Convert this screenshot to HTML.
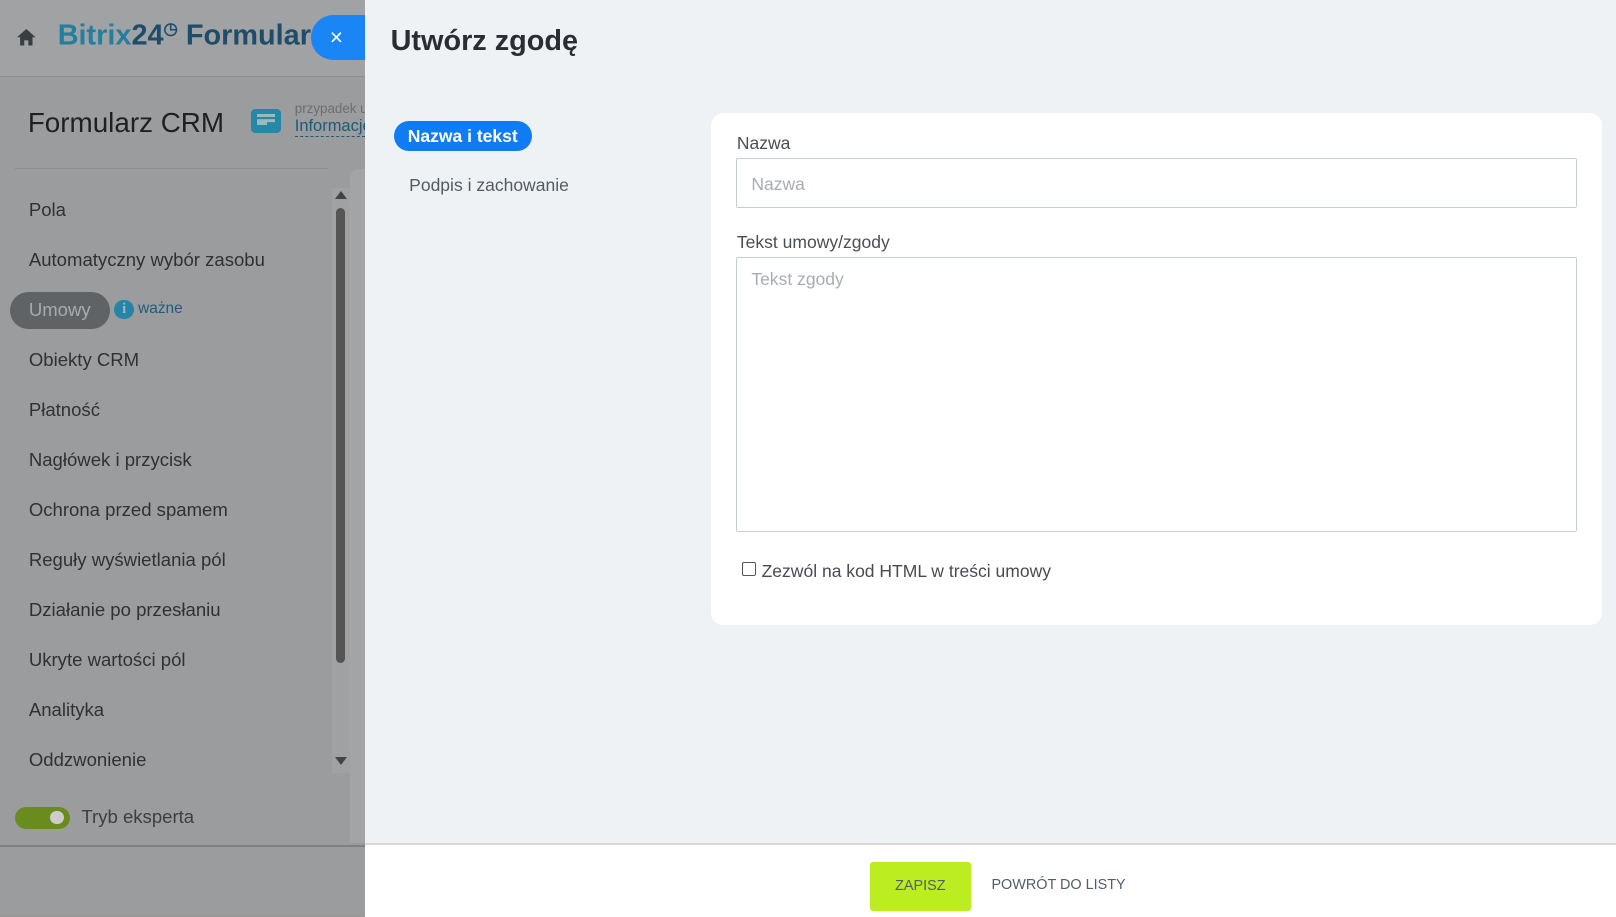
<!DOCTYPE html>
<html><head><meta charset="utf-8"><style>
html,body{margin:0;padding:0;}
body{width:1568px;height:888px;overflow:hidden;zoom:1.03061;font-family:"Liberation Sans",sans-serif;position:relative;background:#999;}
.abs{position:absolute;}
.left{left:0;top:0;width:354px;height:888px;background:#9b9c9d;}
.top{left:0;top:0;width:354px;height:74px;background:#a1a2a3;border-bottom:1px solid #8e8f90;}
.nav{left:28px;font-size:18px;color:#2f3235;}
.panel{left:354px;top:0;width:1214px;height:818px;background:#eef2f4;}
.foot{left:354px;top:818px;width:1214px;height:70px;background:#fff;border-top:2px solid #d5d7d9;}
.card{left:690px;top:110px;width:864px;height:496px;background:#fff;border-radius:12px;}
.lbl{font-size:17px;color:#4a4f55;}
.inp{border:1px solid #c6cdd3;border-radius:2px;background:#fff;box-sizing:border-box;}
.ph{color:#a8adb4;font-size:17px;}
</style></head><body>
<div class="abs left"></div>
<div class="abs top"></div>
<svg class="abs" style="left:16px;top:27px" width="20" height="18" viewBox="0 0 20 18"><path d="M10 1L1 9h3v8h4v-5h4v5h4V9h3z" fill="#3a3d40"/></svg>
<div class="abs" style="left:56px;top:18px;font-size:28px;font-weight:bold;white-space:nowrap"><span style="color:#237fa0">Bitrix</span><span style="color:#1d4d6a">24</span><span style="color:#1d4d6a;font-size:16px;vertical-align:super">&#9719;</span><span style="color:#1d4d6a"> Formularz</span></div>
<div class="abs" style="left:302px;top:15px;width:60px;height:43px;background:#1a86f5;border-radius:22px 0 0 22px;color:#fff;font-size:22px;line-height:43px;padding-left:18px;box-sizing:border-box">×</div>
<div class="abs" style="left:27px;top:104px;font-size:27px;color:#1e2124">Formularz CRM</div>
<div class="abs" style="left:244px;top:106px;width:29px;height:23px;background:#2688a8;border-radius:4px"><div style="margin:5px 0 0 5px;width:18px;height:3px;background:#9bb;box-shadow:0 5px 0 #9bb"></div><div style="margin:4px 0 0 5px;width:10px;height:3px;background:#9bb"></div></div>
<div class="abs" style="left:286px;top:98px;font-size:13px;color:#6b6e72">przypadek u</div>
<div class="abs" style="left:286px;top:114px;font-size:16px;color:#1c5a7a;border-bottom:1px dashed #1c5a7a;width:68px;overflow:hidden;white-space:nowrap">Informacje</div>
<div class="abs" style="left:15px;top:163px;width:303px;height:1px;background:#8c8d8e"></div>
<div class="abs" style="left:340px;top:164px;width:14px;height:654px;background:#a3a4a5;border-radius:8px 0 0 0"></div>
<div class="abs" style="left:322px;top:182px;width:18px;height:568px;background:#a0a1a2"></div>
<div class="abs" style="left:325px;top:185px;width:0;height:0;border-left:6px solid transparent;border-right:6px solid transparent;border-bottom:8px solid #444"></div>
<div class="abs" style="left:326px;top:202px;width:9px;height:441px;background:#555;border-radius:5px"></div>
<div class="abs" style="left:325px;top:735px;width:0;height:0;border-left:6px solid transparent;border-right:6px solid transparent;border-top:8px solid #444"></div>
<div class="abs nav" style="top:193px">Pola</div>
<div class="abs nav" style="top:242px">Automatyczny wybór zasobu</div>
<div class="abs" style="left:10px;top:283px;width:97px;height:36px;background:#5f6366;border-radius:18px"></div>
<div class="abs nav" style="top:290px;color:#a8abae">Umowy</div>
<div class="abs" style="left:111px;top:291px;width:19px;height:19px;border-radius:50%;background:#2584a8;color:#9bc;font-size:14px;font-weight:bold;text-align:center;line-height:19px;font-family:'Liberation Serif',serif">i</div>
<div class="abs" style="left:134px;top:291px;font-size:15px;color:#1d5d7e">ważne</div>
<div class="abs nav" style="top:339px">Obiekty CRM</div>
<div class="abs nav" style="top:387px">Płatność</div>
<div class="abs nav" style="top:436px">Nagłówek i przycisk</div>
<div class="abs nav" style="top:484px">Ochrona przed spamem</div>
<div class="abs nav" style="top:533px">Reguły wyświetlania pól</div>
<div class="abs nav" style="top:581px">Działanie po przesłaniu</div>
<div class="abs nav" style="top:630px">Ukryte wartości pól</div>
<div class="abs nav" style="top:678px">Analityka</div>
<div class="abs nav" style="top:727px">Oddzwonienie</div>
<div class="abs" style="left:15px;top:783px;width:53px;height:21px;background:#6a8c1e;border-radius:11px"><div style="margin:4px 0 0 34px;width:13px;height:13px;border-radius:50%;background:#ccc"></div></div>
<div class="abs" style="left:79px;top:782px;font-size:18px;color:#3c3f42">Tryb eksperta</div>
<div class="abs" style="left:0;top:820px;width:354px;height:2px;background:#7f8081"></div>

<div class="abs panel"></div>
<div class="abs" style="left:379px;top:24px;font-size:28px;font-weight:bold;color:#2a2d31">Utwórz zgodę</div>
<div class="abs" style="left:382px;top:117px;width:134px;height:30px;background:#0f7cf5;border-radius:15px;color:#fff;font-weight:bold;font-size:17px;line-height:30px;text-align:center">Nazwa i tekst</div>
<div class="abs" style="left:397px;top:170px;font-size:17px;color:#555b61">Podpis i zachowanie</div>
<div class="abs card"></div>
<div class="abs lbl" style="left:715px;top:129px">Nazwa</div>
<div class="abs inp" style="left:714px;top:153px;width:816px;height:49px"></div>
<div class="abs ph" style="left:729px;top:169px">Nazwa</div>
<div class="abs lbl" style="left:715px;top:225px">Tekst umowy/zgody</div>
<div class="abs inp" style="left:714px;top:249px;width:816px;height:267px"></div>
<div class="abs ph" style="left:729px;top:261px">Tekst zgody</div>
<div class="abs" style="left:720px;top:545px;width:12px;height:12px;border:1px solid #555;border-radius:2px;background:#fff"></div>
<div class="abs lbl" style="left:739px;top:544px;color:#474c52">Zezwól na kod HTML w treści umowy</div>

<div class="abs foot"></div>
<div class="abs" style="left:844px;top:836px;width:98px;height:48px;background:#bbed21;border-radius:3px;color:#535c69;font-size:14px;text-align:center;line-height:48px">ZAPISZ</div>
<div class="abs" style="left:962px;top:851px;font-size:14px;color:#535c69">POWRÓT DO LISTY</div>
</body></html>
